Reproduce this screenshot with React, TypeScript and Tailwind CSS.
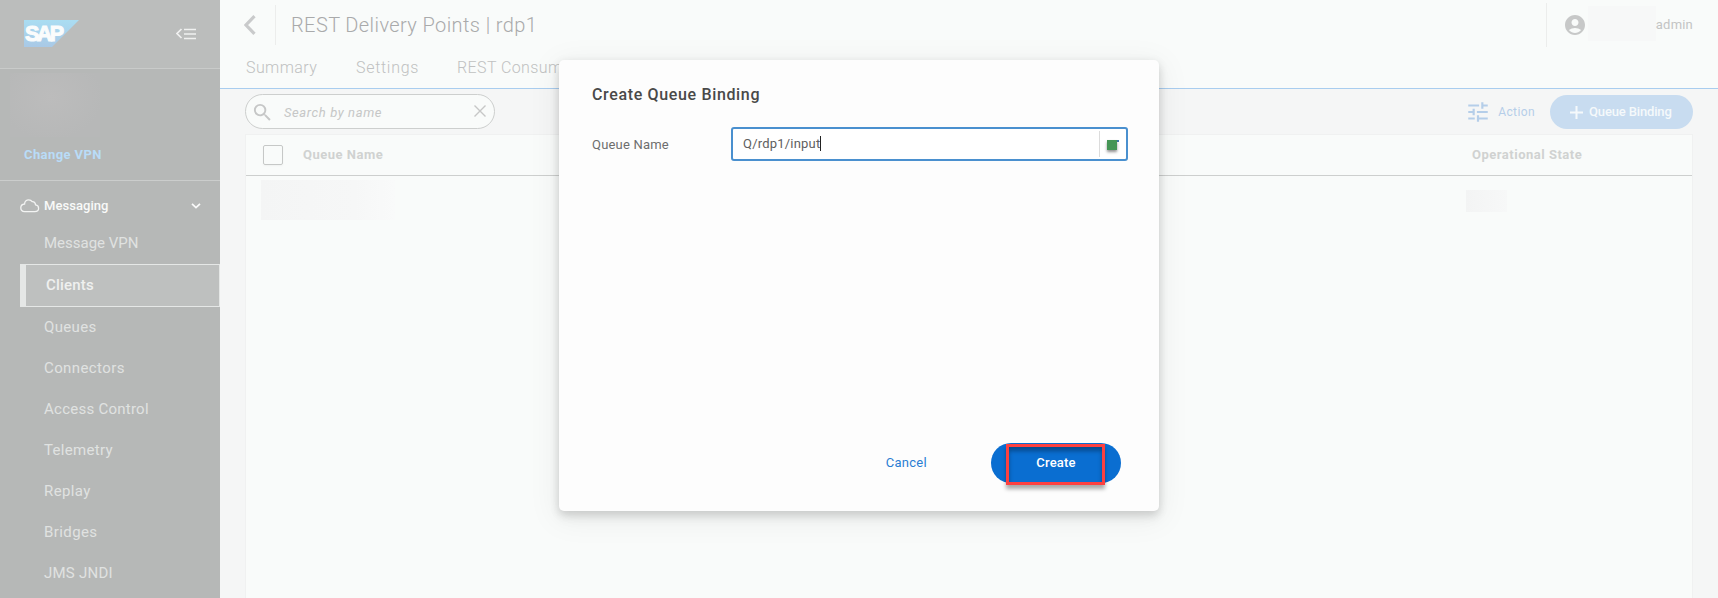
import React from "react";
import { MdAccountCircle, MdSearch, MdTune } from "react-icons/md";

type NavItem = { label: string; spacing: string };

const navItems: NavItem[] = [
  { label: "Queues", spacing: "tracking-[0.35px]" },
  { label: "Connectors", spacing: "tracking-[0.4px]" },
  { label: "Access Control", spacing: "tracking-[0.25px]" },
  { label: "Telemetry", spacing: "tracking-[0.3px]" },
  { label: "Replay", spacing: "tracking-[0.4px]" },
  { label: "Bridges", spacing: "tracking-[0.4px]" },
  { label: "JMS JNDI", spacing: "tracking-[0.25px]" },
];

function SapLogo() {
  return (
    <svg width="55" height="27" viewBox="0 0 55 27" className="overflow-visible">
      <defs>
        <linearGradient id="sap" x1="0" y1="0" x2="0" y2="1">
          <stop offset="0" stopColor="#aaddf2" />
          <stop offset="1" stopColor="#a9c9e6" />
        </linearGradient>
      </defs>
      <path d="M0 0H55L28 27H0Z" fill="url(#sap)" />
      <text
        x="1"
        y="21.3"
        letterSpacing="-2.6"
        fontFamily="Liberation Sans, sans-serif"
        fontWeight="700"
        fontSize="21.5"
        fill="#fafcfc"
        stroke="#fafcfc"
        strokeWidth="1.1"
      >
        SAP
      </text>
    </svg>
  );
}

function Sidebar() {
  return (
    <aside className="flex w-[220px] shrink-0 flex-col bg-[#b6b8b7]">
      <div className="flex h-[69px] items-center justify-between border-b border-[#c9cbca] bg-[#bbbdbc] pr-6 pb-px pl-6">
        <SapLogo />
        <svg width="20" height="12" viewBox="0 0 20 12" fill="none" stroke="#f0f1f0">
          <path d="M5.5 1L1 5.5L5.5 10" strokeWidth="1.7" />
          <path d="M8 1.5H20M8 6H20M8 10.5H20" strokeWidth="1.5" />
        </svg>
      </div>
      <div className="flex h-[112px] flex-col border-b border-[#cbcdcc] pt-1 pl-2.5">
        <div className="h-[64px] w-[90px] bg-[radial-gradient(ellipse_at_45%_38%,#bcbcbc,#b7b8b8_75%)]" />
        <a className="mt-2 pl-3.5 text-[13px] leading-5 font-bold tracking-[0.4px] text-[#b9dcf8]">Change VPN</a>
      </div>
      <div className="flex h-[48px] items-center pt-px pr-[19px] pl-5">
        <svg width="20" height="14" viewBox="0 0 20 14" fill="none" stroke="#f3f4f3" strokeWidth="1.3">
          <path d="M4.6 12.6H14.8C17.3 12.6 18.6 11 18.6 9.2C18.6 7.3 17.2 6 15.6 5.8C15.3 3.4 13.8 2.4 12.2 2.6C11.3 1.3 10 .8 8.8.8C6.4.8 4.6 2.6 4.6 5C2.2 5.2.8 6.8.8 8.8C.8 11 2.4 12.6 4.6 12.6Z" />
        </svg>
        <span className="ml-1 flex-1 pt-px text-[13px] font-medium tracking-[0.05px] text-[#f9faf9]">Messaging</span>
        <svg width="10" height="6" viewBox="0 0 10 6" fill="none" stroke="#fafafa" strokeWidth="1.7">
          <path d="M1 .8L5 4.6L9 .8" />
        </svg>
      </div>
      <nav className="flex flex-col text-[15px] text-[#e0e2e1]">
        <div className="flex h-[35px] items-center pb-[7px] pl-11">Message VPN</div>
        <div className="ml-5 flex h-[43px] items-center border border-l-[6px] border-[#e5e7e6] bg-[#bec0bf] pb-px pl-5 font-medium tracking-[0.2px] text-[#eff0ef]">
          Clients
        </div>
        {navItems.map((item) => (
          <div key={item.label} className={`flex h-[41px] items-center pl-11 ${item.spacing}`}>
            {item.label}
          </div>
        ))}
      </nav>
    </aside>
  );
}

function Header() {
  return (
    <header className="h-[89px] border-b border-[#a9cdef] bg-[#f9fbfa]">
      <div className="flex h-[50px] items-start">
        <svg width="12" height="20" viewBox="0 0 12 20" fill="none" stroke="#c9cacb" strokeWidth="3.2" className="mt-[15px] ml-6">
          <path d="M10.5 1.2L2 10L10.5 18.8" />
        </svg>
        <div className="mt-[5px] ml-[19px] h-10 w-px bg-[#ecedec]" />
        <h1 className="ml-[15px] pt-[11px] text-[20px] leading-7 font-light tracking-[0.4px] text-[#a9aaab]">
          REST Delivery Points | rdp1
        </h1>
        <div className="mt-[3px] mr-4 ml-auto h-11 w-px bg-[#ecedec]" />
        <MdAccountCircle className="mt-[13px] h-6 w-6 text-[#c7c8c8]" />
        <div className="mt-1.5 ml-[1px] h-[35px] w-[68px] bg-[#f7f8f8]" />
        <span className="mr-[25px] pt-[15px] text-[13px] leading-5 tracking-[0.2px] text-[#c3c4c4]">admin</span>
      </div>
      <div className="flex pt-[6px] pl-[26px] text-[16px] leading-6 font-light tracking-[0.4px] text-[#c0c1c1]">
        <span className="w-[110px]">Summary</span>
        <span className="w-[101px] tracking-[0.7px]">Settings</span>
        <span>REST Consumers</span>
      </div>
    </header>
  );
}

function Toolbar() {
  return (
    <div className="flex h-[45px] items-start pt-[5px] pr-[25px] pl-[25px]">
      <div className="flex h-[35px] w-[250px] items-center rounded-full border border-[#cdcfce] bg-[#f9fbfa] pr-2 pl-[5px] text-[#c6c7c7]">
        <MdSearch className="mt-0.5 h-[23px] w-[23px]" />
        <span className="mt-0.5 ml-2.5 flex-1 text-[13px] tracking-[0.6px] italic">Search by name</span>
        <svg width="12" height="12" viewBox="0 0 12 12" stroke="currentColor" strokeWidth="1.4" className="mb-0.5">
          <path d="M.5 .5L11.5 11.5M11.5 .5L.5 11.5" />
        </svg>
      </div>
      <MdTune className="mt-[5px] ml-auto h-[26px] w-[26px] text-[#b5cee9]" />
      <span className="ml-[7px] pt-2 text-[12px] leading-5 tracking-[0.4px] text-[#b5cee9]">Action</span>
      <div className="mt-px ml-[15px] flex h-[34px] w-[143px] items-center rounded-full bg-[#c8dcf0] pl-5 text-[13px] font-medium tracking-[-0.15px] text-[#f5f9fb]">
        <svg width="13" height="13" viewBox="0 0 13 13" stroke="currentColor" strokeWidth="2" className="mr-1.5">
          <path d="M6.5 0V13M0 6.5H13" />
        </svg>
        Queue Binding
      </div>
    </div>
  );
}

function BindingsTable() {
  return (
    <div className="mr-[25px] ml-[25px] flex-1 border border-b-0 border-[#f0f1f1] bg-[#f9fbfa]">
      <div className="flex h-[41px] items-center border-b border-[#cdcfce] pb-px text-[13px] font-bold tracking-[0.5px] text-[#d0d2d1]">
        <div className="ml-[17px] h-5 w-5 rounded-[2px] border border-[#c6c8c7] shadow-[0_1px_2px_#0000000a]" />
        <span className="ml-[20px]">Queue Name</span>
        <span className="ml-auto w-[220px]">Operational State</span>
      </div>
      <div className="flex items-start justify-between pt-1 pr-[185px] pl-[15px]">
        <div className="h-10 w-[134px] bg-[linear-gradient(90deg,#f4f5f5,#f6f7f7_70%,#f9fafa)]" />
        <div className="mt-2.5 h-[22px] w-[41px] bg-[linear-gradient(90deg,#f3f4f4,#f7f8f8)]" />
      </div>
    </div>
  );
}

function CreateDialog() {
  return (
    <div className="absolute top-[60px] left-[559px] flex h-[451px] w-[600px] flex-col rounded-[5px] bg-[#fdfdfd] px-[33px] shadow-[0_6px_30px_5px_#0000000d,0_8px_12px_#0000000c,0_3px_10px_#00000024]">
      <h2 className="mt-[23px] text-[16px] leading-6 font-medium tracking-[0.65px] text-[#494949]">Create Queue Binding</h2>
      <div className="mt-5 flex items-center">
        <label className="w-[139px] shrink-0 pt-0.5 text-[13px] tracking-[0.2px] text-[#6d6d6d]">Queue Name</label>
        <div className="flex h-[34px] w-[397px] shrink-0 items-center rounded-[3px] border-2 border-[#4a90cf] bg-white pl-2.5">
          <span className="pb-px text-[13px] tracking-[0.2px] text-[#606060]">Q/rdp1/input</span>
          <span className="mb-px h-[15px] w-px bg-[#222]" />
          <span className="ml-auto h-[26px] w-px bg-[#dcdcdc]" />
          <span className="relative mt-0.5 mr-[7px] ml-[7px] h-2.5 w-3">
            <span className="absolute top-0 right-0 h-[2px] w-1 bg-[#3f78ad]" />
            <span className="absolute top-0 left-0 h-2.5 w-2.5 bg-[#459555] shadow-[0_2px_3px_#00000070]" />
          </span>
        </div>
      </div>
      <div className="mt-auto mb-7 flex items-center justify-end pr-[5px] text-[13px] font-medium">
        <span className="mr-16 font-normal tracking-[0.3px] text-[#2a7ed3]">Cancel</span>
        <div className="relative flex h-10 w-[130px] items-center justify-center rounded-full bg-[#0a6ed1] tracking-[0.2px] text-white">
          Create
          <span className="absolute top-[1px] left-[15px] h-[41px] w-[99px] border-3 border-[#fd4040] shadow-[0_4px_4px_#00000055,inset_0_4px_4px_#00000055]" />
        </div>
      </div>
    </div>
  );
}

export default function App() {
  return (
    <div className="relative flex h-[598px] w-[1718px] overflow-hidden bg-[#f5f6f6] font-[Roboto,sans-serif]">
      <Sidebar />
      <main className="flex flex-1 flex-col">
        <Header />
        <Toolbar />
        <BindingsTable />
      </main>
      <CreateDialog />
    </div>
  );
}
